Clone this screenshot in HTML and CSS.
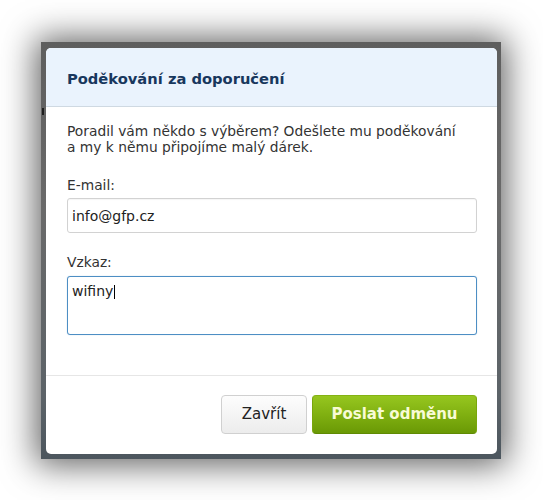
FILE: index.html
```html
<!doctype html>
<html>
<head>
	<meta charset="utf-8">
	<meta name="viewport" content="width=device-width, initial-scale=1.0">
	<title>Poděkování za doporučení</title>
	<link rel="stylesheet" href="styles.css">
</head>
<body>
	<div class="shot">
		<div class="backdrop">
			<span class="peek"></span>
			<form class="modal" name="form1" id="form1">
				<div class="modal-header">
					<h3>Poděkování za doporučení</h3>
				</div>
				<div class="modal-body">
					<p class="intro">Poradil vám někdo s výběrem? Odešlete mu poděkování<br>a my k němu připojíme malý dárek.</p>
					<label class="label" for="email">E-mail:</label>
					<input type="text" class="field" id="email" name="email" value="info@gfp.cz">
					<label class="label label-msg" for="msg">Vzkaz:</label>
					<div class="field field-area" id="msg">wifiny<span class="caret"></span></div>
				</div>
				<div class="modal-footer">
					<span class="btn btn-default">Zavřít</span>
					<span class="btn btn-success">Poslat odměnu</span>
				</div>
			</form>
		</div>
	</div>
</body>
</html>
```

FILE: styles.css
```css
	html, body {
		margin: 0;
		background: #fff;
	}
	body {
		font-family: "DejaVu Sans", Verdana, sans-serif;
		font-size: 13.8px;
		line-height: 16px;
		color: #333;
	}
	.shot {
		padding: 42px 42px 41px 41px;
	}
	/* dark overlay of the page behind the dialog */
	.backdrop {
		position: relative;
		width: 460px;
		height: 417px;
		box-sizing: border-box;
		padding: 6px 4px 5px 5px;
		background: linear-gradient(to bottom, #5e5e5e 0, #6a6a6a 40%, #5c6368 85%, #4c565e 100%);
		box-shadow: 0 1px 32px 5px rgba(0,0,0,.62);
	}
	.peek {
		position: absolute;
		left: 1px;
		top: 66px;
		width: 2px;
		height: 7px;
		background: #1e1e1e;
	}
	.modal {
		display: flex;
		flex-direction: column;
		height: 100%;
		margin: 0;
		background: #fff;
		border-radius: 5px;
		overflow: hidden;
	}
	.modal-header {
		padding: 21px 20px 17px 21px;
		background-color: #eaf3fd;
		border-bottom: 1px solid #cfd9e2;
	}
	.modal-header h3 {
		margin: 0;
		font-size: 14.7px;
		line-height: 20px;
		font-weight: bold;
		color: #18375d;
	}
	.modal-body {
		flex: 1;
		display: flex;
		flex-direction: column;
		padding: 16px 20px 0 21px;
	}
	.intro {
		margin: 0 0 22px;
	}
	.label {
		display: block;
		margin-bottom: 5px;
	}
	.label-msg {
		margin-top: 21px;
		margin-bottom: 6px;
	}
	.field {
		display: block;
		box-sizing: border-box;
		width: 410px;
		height: 35px;
		margin: 0;
		padding: 0 4px;
		font-family: inherit;
		font-size: 14px;
		color: #222;
		background: #fff;
		border: 1px solid #d2d2d2;
		border-radius: 3px;
		box-shadow: inset 0 1px 1px rgba(0,0,0,.04);
		outline: 0;
	}
	.field-area {
		height: 59px;
		padding: 6px 4px;
		border-color: #4d8ec4;
		box-shadow: 0 0 1px rgba(77,142,196,.5);
	}
	.caret {
		display: inline-block;
		width: 1px;
		height: 14px;
		margin-left: 1px;
		vertical-align: -3px;
		background: #000;
	}
	.modal-footer {
		display: flex;
		justify-content: flex-end;
		gap: 5px;
		padding: 19px 20px 20px;
		border-top: 1px solid #e6e6e6;
	}
	.btn {
		display: inline-block;
		box-sizing: border-box;
		height: 39px;
		line-height: 37px;
		text-align: center;
		font-size: 15px;
		border-radius: 4px;
		border: 1px solid;
		cursor: pointer;
	}
	.btn-default {
		width: 86px;
		color: #222;
		background-image: linear-gradient(to bottom, #fdfdfd 0, #ececec 100%);
		border-color: #d0d0d0;
	}
	.btn-success {
		width: 165px;
		font-weight: bold;
		color: #f8fbd5;
		background-image: linear-gradient(to bottom, #96c61f 0, #80b011 50%, #6a9905 100%);
		border-color: #84b214 #79a60c #5f8a03;
	}
```
